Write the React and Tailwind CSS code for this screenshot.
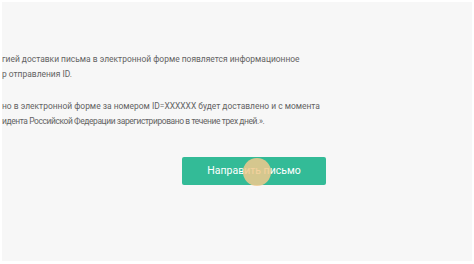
export default function App() {
  return (
    <div className="w-[474px] h-[264px] bg-white overflow-hidden">
      <div className="ml-[2px] mt-[2px] w-[470px] h-[259px] bg-[#f7f7f7] overflow-hidden flex flex-col" style={{ fontFamily: '"Roboto", "Liberation Sans", sans-serif' }}>
        <div className="pt-[50px] text-[8.45px] leading-[15px] text-[#636363] whitespace-nowrap">
          <div>гией доставки письма в электронной форме появляется информационное</div>
          <div>р отправления ID.</div>
          <div className="mt-[17px]">но в электронной форме за номером ID=XXXXXX будет доставлено и с момента</div>
          <div className="tracking-[-0.4px]">идента Российской Федерации зарегистрировано в течение трех дней.».</div>
        </div>
        <div className="mt-[28px] ml-[180px] relative w-[144px] h-[28px]">
          <div className="w-full h-full rounded-[2px] bg-[#33bb97] flex items-center justify-center text-white text-[10.5px]">
            Направить письмо
          </div>
          <div className="absolute left-[61px] top-[1px] w-[28px] h-[28px] rounded-full bg-[#f2c98c]/85"></div>
        </div>
      </div>
    </div>
  );
}
